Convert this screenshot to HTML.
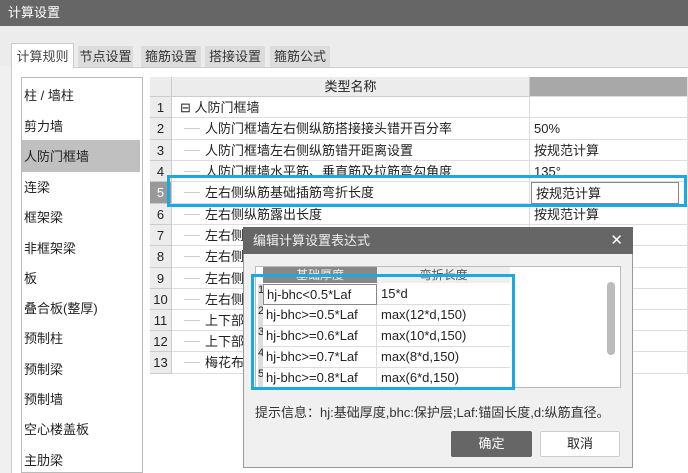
<!DOCTYPE html>
<html><head><meta charset="utf-8"><style>
*{margin:0;padding:0;box-sizing:border-box}
body{width:688px;height:473px;overflow:hidden;background:#f0f0f0;font-family:"Liberation Sans","Noto Sans CJK SC",sans-serif;font-size:13px;color:#222;position:relative}
.a{position:absolute}
.title{left:0;top:0;width:688px;height:26px;background:#666;color:#fff;font-size:13px;line-height:26px;padding-left:8px}
.tab{top:46px;height:21px;background:#dcdcdc;color:#333;text-align:center;line-height:21px;font-size:13px}
.cell{position:absolute;border-right:1px solid #ddd;border-bottom:1px solid #ddd;line-height:21px;white-space:nowrap;overflow:hidden}
.num{background:#ececec;text-align:center;border-right:1px solid #ccc;border-bottom:1px solid #ccc}
.li{left:24px;font-size:13px}
</style></head><body>
<div class="a title">计算设置</div>
<div class="a" style="left:0;top:26px;width:688px;height:40px;background:#ececec"></div>
<div class="a" style="left:11px;top:67px;width:677px;height:406px;background:#fff;border-left:1px solid #ccc;border-top:1px solid #ccc"></div>
<div class="a tab" style="left:11px;top:43px;width:63px;height:25px;background:#fff;border:1px solid #ccc;border-bottom:none;line-height:25px;color:#444">计算规则</div>
<div class="a tab" style="left:78px;width:55px">节点设置</div>
<div class="a tab" style="left:141px;width:60px">箍筋设置</div>
<div class="a tab" style="left:205px;width:60px">搭接设置</div>
<div class="a tab" style="left:270px;width:60px">箍筋公式</div>
<div class="a" style="left:21px;top:77px;width:122px;height:396px;border:1px solid #bbb;background:#fff"></div>
<div class="a" style="left:22px;top:140px;width:118px;height:32px;background:#c0c0c0"></div>
<div class="a li" style="top:85px">柱 / 墙柱</div>
<div class="a li" style="top:116px">剪力墙</div>
<div class="a li" style="top:146px">人防门框墙</div>
<div class="a li" style="top:177px">连梁</div>
<div class="a li" style="top:207px">框架梁</div>
<div class="a li" style="top:238px">非框架梁</div>
<div class="a li" style="top:268px">板</div>
<div class="a li" style="top:298px">叠合板(整厚)</div>
<div class="a li" style="top:328px">预制柱</div>
<div class="a li" style="top:359px">预制梁</div>
<div class="a li" style="top:389px">预制墙</div>
<div class="a li" style="top:419px">空心楼盖板</div>
<div class="a li" style="top:450px">主肋梁</div>
<div class="a" style="left:150px;top:77px;width:538px;height:297px;border-left:1px solid #ccc;border-top:1px solid #ccc"></div>
<div class="cell num" style="left:150px;top:77px;width:22px;height:20px"></div>
<div class="cell" style="left:172px;top:77px;width:358px;height:20px;background:#ececec;text-align:center;line-height:20px;border-color:#ccc">类型名称</div>
<div class="cell" style="left:530px;top:77px;width:158px;height:20px;background:#a8a8a8"></div>
<div id="rows"></div>
<div class="a" style="left:167px;top:175px;width:520px;height:32px;border:3px solid #1aa9e0"></div>
<div class="a" style="left:243px;top:227px;width:390px;height:241px;background:#f0f0f0;border:1px solid #999"></div>
<div class="a" style="left:243px;top:227px;width:390px;height:27px;background:#666;color:#eee;line-height:27px;padding-left:10px">编辑计算设置表达式<span style="position:absolute;right:10px;color:#fff;font-size:15px">✕</span></div>
<div class="a" style="left:255px;top:266px;width:366px;height:122px;background:#fff;border:1px solid #bbb"></div>
<div class="a" style="left:263px;top:267px;width:114px;height:16px;background:#888;color:#eee;text-align:center;font-size:12px;line-height:16px">基础厚度</div>
<div class="a" style="left:377px;top:267px;width:133px;height:16px;background:#eee;text-align:center;font-size:12px;line-height:16px;color:#555">弯折长度</div>
<div class="a" style="left:607px;top:282px;width:8px;height:73px;background:#bbb;border-radius:4px"></div>
<div id="drows"></div>
<div class="a" style="left:251px;top:274px;width:264px;height:116px;border:3px solid #1aa9e0"></div>
<div class="a" style="left:255px;top:402px;font-size:13px;color:#333">提示信息：hj:基础厚度,bhc:保护层;Laf:锚固长度,d:纵筋直径。</div>
<div class="a" style="left:451px;top:431px;width:81px;height:26px;background:#666;color:#fff;text-align:center;line-height:26px;border-radius:2px">确定</div>
<div class="a" style="left:540px;top:431px;width:80px;height:26px;background:#fff;border:1px solid #ccc;text-align:center;line-height:24px;border-radius:2px">取消</div>
<script>
var names=["⊟ 人防门框墙","人防门框墙左右侧纵筋搭接接头错开百分率","人防门框墙左右侧纵筋错开距离设置","人防门框墙水平筋、垂直筋及拉筋弯勾角度","左右侧纵筋基础插筋弯折长度","左右侧纵筋露出长度","左右侧纵筋","左右侧纵筋","左右侧纵筋","左右侧纵筋","上下部纵筋","上下部纵筋","梅花布置"];
var vals=["","50%","按规范计算","135°","按规范计算","按规范计算","","","","","","",""];
var h="",tops=[97,118,140,161,182,204,225,246,268,289,310,331,352];
for(var i=0;i<13;i++){var t=tops[i],ht=(tops[i+1]||374)-t;
var nb=i==4?"background:#999;color:#fff;":"";
h+='<div class="cell num" style="left:150px;top:'+t+'px;width:22px;height:'+ht+'px;'+nb+'">'+(i+1)+'</div>';
var pl=i==0?8:33;
h+='<div class="cell" style="left:172px;top:'+t+'px;width:358px;height:'+ht+'px;padding-left:'+pl+'px">'+(i?'<span style="position:absolute;left:12px;top:10px;width:16px;border-top:1px solid #ccc"></span>':'')+names[i]+'</div>';
var vs=i==4?"border:1px solid #888;left:531px;width:148px;padding-left:4px;":"left:530px;width:158px;padding-left:4px;";
h+='<div class="cell" style="top:'+t+'px;height:'+ht+'px;'+vs+'">'+vals[i]+'</div>';}
document.getElementById("rows").innerHTML=h;
var a=["hj-bhc&lt;0.5*Laf","hj-bhc&gt;=0.5*Laf","hj-bhc&gt;=0.6*Laf","hj-bhc&gt;=0.7*Laf","hj-bhc&gt;=0.8*Laf"],b=["15*d","max(12*d,150)","max(10*d,150)","max(8*d,150)","max(6*d,150)"];
h="";for(i=0;i<5;i++){t=284+i*21;
h+='<div class="a" style="left:258px;top:'+t+'px;width:5px;height:21px;background:#ddd;font-size:11px;overflow:hidden">'+(i+1)+'</div>';
var c1=i==0?"border:1px solid #888;":"border-right:1px solid #ddd;border-bottom:1px solid #ddd;";
h+='<div class="a" style="left:263px;top:'+t+'px;width:114px;height:21px;'+c1+'padding-left:3px;line-height:20px;font-size:13px;background:#fff;overflow:hidden;white-space:nowrap">'+a[i]+'</div>';
h+='<div class="a" style="left:377px;top:'+t+'px;width:133px;height:21px;border-bottom:1px solid #ddd;padding-left:4px;line-height:20px;font-size:13px;overflow:hidden">'+b[i]+'</div>';}
document.getElementById("drows").innerHTML=h;
</script>
</body></html>
